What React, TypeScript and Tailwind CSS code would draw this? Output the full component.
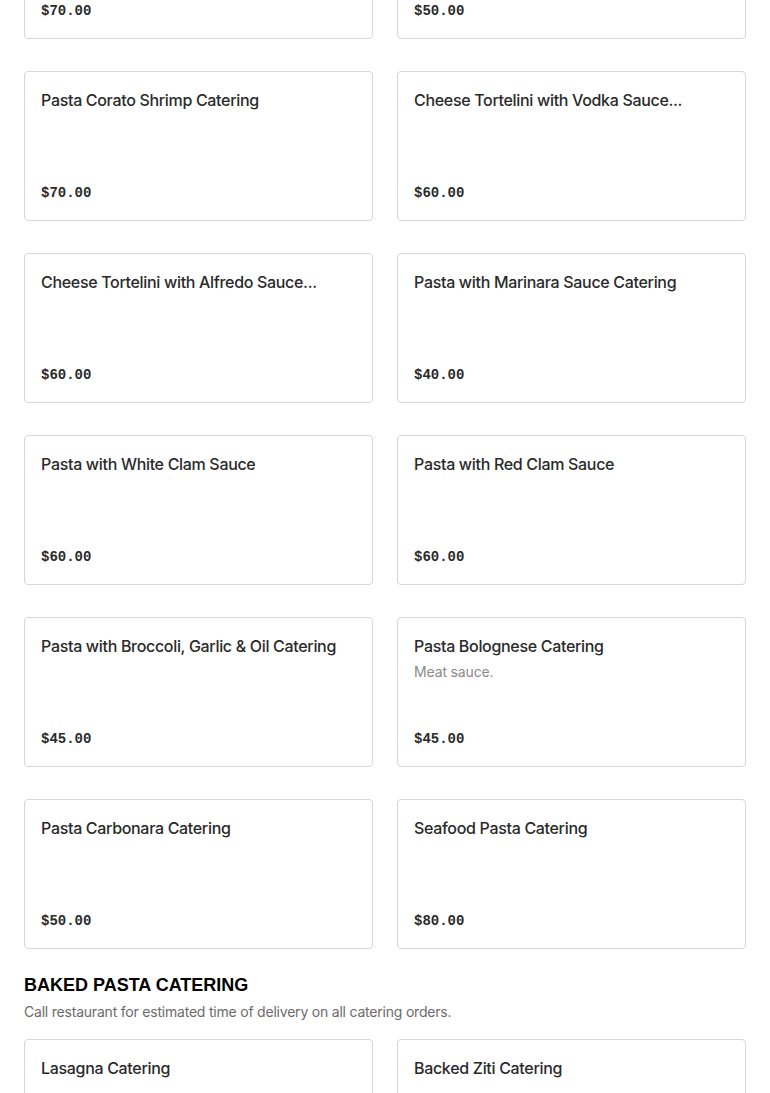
const rows: { name: string; desc?: string; price: string }[][] = [
  [
    { name: "Pasta Primavera Catering", price: "$70.00" },
    { name: "Pasta with Vodka Sauce Catering", price: "$50.00" },
  ],
  [
    { name: "Pasta Corato Shrimp Catering", price: "$70.00" },
    { name: "Cheese Tortelini with Vodka Sauce...", price: "$60.00" },
  ],
  [
    { name: "Cheese Tortelini with Alfredo Sauce...", price: "$60.00" },
    { name: "Pasta with Marinara Sauce Catering", price: "$40.00" },
  ],
  [
    { name: "Pasta with White Clam Sauce", price: "$60.00" },
    { name: "Pasta with Red Clam Sauce", price: "$60.00" },
  ],
  [
    { name: "Pasta with Broccoli, Garlic & Oil Catering", price: "$45.00" },
    { name: "Pasta Bolognese Catering", desc: "Meat sauce.", price: "$45.00" },
  ],
  [
    { name: "Pasta Carbonara Catering", price: "$50.00" },
    { name: "Seafood Pasta Catering", price: "$80.00" },
  ],
];

const baked = [
  { name: "Lasagna Catering", price: "$60.00" },
  { name: "Backed Ziti Catering", price: "$50.00" },
];

function ItemCard({ name, desc, price }: { name: string; desc?: string; price: string }) {
  return (
    <div className="h-[150px] rounded border border-[#d6d6d6] bg-white p-4 flex flex-col justify-between">
      <div>
        <div className="text-[16px] leading-6 font-medium tracking-[-0.02em] text-[#2a2a2a] font-['Inter',sans-serif] truncate">
          {name}
        </div>
        {desc && (
          <div className="mt-1 text-[14px] leading-5 tracking-[-0.01em] text-[#8a8a8a] font-['Inter',sans-serif]">
            {desc}
          </div>
        )}
      </div>
      <div className="text-[14px] leading-5 mb-px font-bold text-[#2a2a2a] font-['Liberation_Mono',monospace]">
        {price}
      </div>
    </div>
  );
}

export default function App() {
  return (
    <div className="min-h-screen bg-white overflow-hidden">
      <div className="px-6 mt-[-111px]">
        <div className="flex flex-col gap-8">
          {rows.map((row, i) => (
            <div key={i} className="grid grid-cols-2 gap-6">
              {row.map((item) => (
                <ItemCard key={item.name} {...item} />
              ))}
            </div>
          ))}
        </div>

        <h2 className="mt-[22px] text-[18px] leading-7 font-black uppercase text-black font-['Liberation_Sans',sans-serif]">
          Baked Pasta Catering
        </h2>
        <p className="mt-[3px] text-[14px] leading-5 tracking-[-0.015em] text-[#6b6b6b] font-['Inter',sans-serif]">
          Call restaurant for estimated time of delivery on all catering orders.
        </p>

        <div className="mt-[17px] grid grid-cols-2 gap-6">
          {baked.map((item) => (
            <ItemCard key={item.name} {...item} />
          ))}
        </div>
      </div>
    </div>
  );
}
